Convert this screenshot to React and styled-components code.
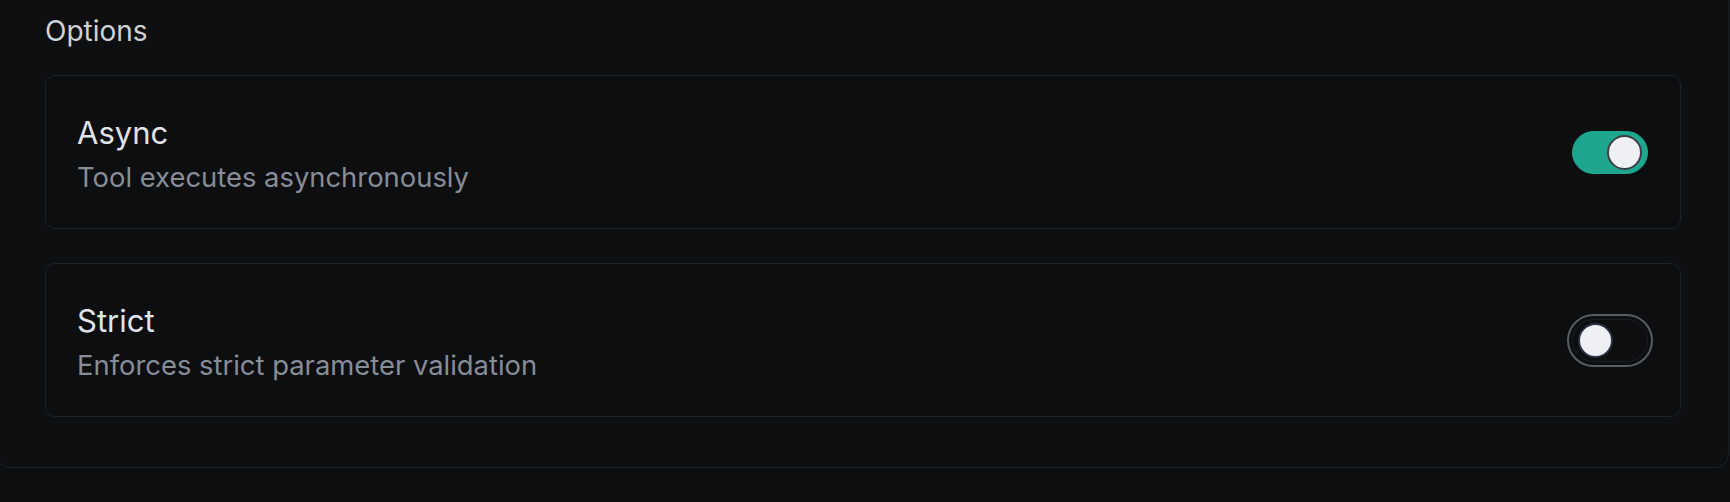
import React, { useState } from "react";
import styled, { createGlobalStyle } from "styled-components";

const GlobalStyle = createGlobalStyle`
  html, body {
    margin: 0;
    padding: 0;
    background: #0d0e10;
    font-family: Inter, "Noto Sans", "Liberation Sans", sans-serif;
    -webkit-font-smoothing: antialiased;
  }
`;

const Panel = styled.section`
  margin: -40px 0 0 -3px;
  width: 1732px;
  box-sizing: border-box;
  padding: 49px 47px 50px;
  background: #0e0f11;
  border: 1px solid #1d212a;
  border-radius: 13px;
`;

const Label = styled.h3`
  margin: 0 0 23px;
  font-size: 28px;
  line-height: 42px;
  font-weight: 400;
  color: #cfd2d8;
`;

const List = styled.div`
  display: flex;
  flex-direction: column;
  gap: 34px;
`;

const Card = styled.div`
  display: flex;
  align-items: center;
  justify-content: space-between;
  height: 154px;
  box-sizing: border-box;
  padding: 0 32px 0 31px;
  border: 1px solid #1d212a;
  border-radius: 10px;
  background: #0d0e10;
`;

const Text = styled.div`
  display: flex;
  flex-direction: column;
  gap: 5px;
  padding-top: 3px;
`;

const Title = styled.div`
  font-size: 31px;
  line-height: 42px;
  color: #e1e3e8;
`;

const Description = styled.div`
  font-size: 27.4px;
  line-height: 36px;
  color: #878d98;
`;

const Track = styled.button`
  position: relative;
  flex: none;
  width: 76px;
  height: 43px;
  padding: 0;
  border-radius: 999px;
  cursor: pointer;
  border: 1px solid ${(p) => (p.$on ? "#1fa68f" : "#1c1e24")};
  background: ${(p) => (p.$on ? "#1fa68f" : "#0d0e10")};
  box-shadow: ${(p) =>
    p.$on ? "none" : "0 0 0 3px #0d0e10, 0 0 0 5px #5a5c64"};
`;

const Knob = styled.span`
  position: absolute;
  top: 50%;
  left: ${(p) => (p.$on ? "34px" : "5px")};
  width: 35px;
  height: 35px;
  box-sizing: border-box;
  margin-top: -17.5px;
  border-radius: 50%;
  background: #eff0f4;
  border: ${(p) => (p.$on ? "2px solid #3c3f48" : "2px solid #2a3140")};
`;

const Toggle = ({ on, onChange }) => (
  <Track $on={on} onClick={onChange} role="switch" aria-checked={on}>
    <Knob $on={on} />
  </Track>
);

const options = [
  { key: "async", title: "Async", description: "Tool executes asynchronously" },
  { key: "strict", title: "Strict", description: "Enforces strict parameter validation" },
];

export default function App() {
  const [values, setValues] = useState({ async: true, strict: false });

  return (
    <>
      <GlobalStyle />
      <Panel>
        <Label>Options</Label>
        <List>
          {options.map((opt) => (
            <Card key={opt.key}>
              <Text>
                <Title>{opt.title}</Title>
                <Description>{opt.description}</Description>
              </Text>
              <Toggle
                on={values[opt.key]}
                onChange={() =>
                  setValues((v) => ({ ...v, [opt.key]: !v[opt.key] }))
                }
              />
            </Card>
          ))}
        </List>
      </Panel>
    </>
  );
}
